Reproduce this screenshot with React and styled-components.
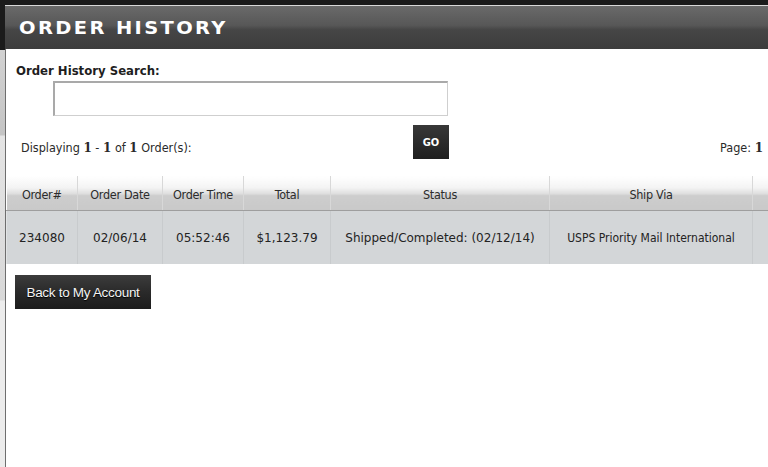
import styled, { createGlobalStyle } from 'styled-components';

const GlobalStyle = createGlobalStyle`
	html, body {
		margin: 0;
		padding: 0;
		background: #ffffff;
		overflow: hidden;
	}
	body {
		font-family: 'DejaVu Sans Condensed', 'DejaVu Sans', sans-serif;
		color: #222;
	}
`;

const Page = styled.div`
	width: 768px;
	height: 467px;
	display: flex;
	flex-direction: column;
	background: #ffffff;
`;

const TopStrip = styled.div`
	height: 5px;
	background: #1b1b1b;
`;

const Body = styled.div`
	flex: 1;
	display: flex;
`;

const LeftRail = styled.div`
	width: 5px;
	background: linear-gradient(
		180deg,
		#1b1b1b 0px,
		#1b1b1b 45px,
		#d2d2d2 45px,
		#c4c4c4 130px,
		#e4e4e4 131px,
		#d8d8d8 295px,
		#ececec 296px
	);
	border-right: 1px solid #6e6e6e;
`;

const Main = styled.div`
	flex: 1;
	min-width: 0;
	display: flex;
	flex-direction: column;
`;

const Header = styled.div`
	height: 43px;
	border-top: 1px solid #d9d9d9;
	background: linear-gradient(180deg, #6a6a6a 0%, #575757 45%, #464646 55%, #3c3c3c 100%);
	display: flex;
	align-items: center;
	padding-left: 14px;
	margin-left: -1px;
`;

const Title = styled.h1`
	margin: 0;
	font-family: 'DejaVu Sans', sans-serif;
	font-weight: 900;
	font-size: 18px;
	letter-spacing: 2.2px;
	color: #ffffff;
	text-transform: uppercase;
	line-height: 1;
	padding-top: 1px;
	transform: scaleX(1.08);
	transform-origin: left center;
`;

const Content = styled.div`
	display: flex;
	flex-direction: column;
	padding-top: 14px;
`;

const SearchLabel = styled.label`
	font-weight: bold;
	font-size: 13px;
	color: #1e1e1e;
	padding-left: 10px;
	line-height: 16px;
`;

const SearchInput = styled.input`
	margin: 2px 0 0 47px;
	width: 395px;
	height: 35px;
	box-sizing: border-box;
	border: 1px solid #cfcfcf;
	border-top: 2px solid #a9a9a9;
	border-left: 2px solid #a9a9a9;
	background: #ffffff;
	outline: none;
`;

const ResultBar = styled.div`
	display: flex;
	align-items: center;
	margin-top: 9px;
	height: 34px;
`;

const ResultLeft = styled.div`
	width: 442px;
	display: flex;
	align-items: center;
	justify-content: space-between;
	padding-left: 15px;
	box-sizing: border-box;
`;

const Info = styled.span`
	font-size: 12.5px;
	color: #2a2a2a;
	padding-top: 11px;

	b {
		font-family: 'DejaVu Serif', serif;
		font-weight: bold;
		font-size: 12px;
	}
`;

const GoButton = styled.button`
	width: 36px;
	height: 34px;
	border: none;
	background: linear-gradient(180deg, #383838 0%, #1f1f1f 100%);
	color: #ffffff;
	font-family: 'DejaVu Sans Condensed', sans-serif;
	font-weight: bold;
	font-size: 11px;
	padding: 0;
	margin-right: -1px;
`;

const PageInfo = styled(Info)`
	margin-left: auto;
	padding-right: 5px;
`;

const Table = styled.table`
	margin-top: 17px;
	width: 762px;
	table-layout: fixed;
	border-collapse: collapse;
	border-spacing: 0;
`;

const HeadCell = styled.th`
	height: 32px;
	padding: 0;
	padding-top: 2px;
	font-weight: normal;
	font-size: 12.5px;
	color: #2c2c2c;
	letter-spacing: -0.3px;
	text-align: center;
	background: linear-gradient(180deg, #ffffff 0%, #f3f3f3 35%, #dedede 52%, #cdcdcd 58%, #c9c9c9 100%);
	border-right: 1px solid #d8d8d8;
	border-bottom: 1px solid #9e9e9e;
	&:last-child {
		border-right: none;
	}
`;

const Cell = styled.td`
	height: 52px;
	padding: 0;
	padding-top: 1px;
	text-align: center;
	background: #d3d6d8;
	border-right: 1px solid #c8cbcd;
	font-family: ${(p) => (p.$mono ? "'DejaVu Sans', sans-serif" : "'DejaVu Sans Condensed', sans-serif")};
	font-size: 12px;
	color: #232323;
	white-space: nowrap;
	overflow: hidden;
	&:first-child {
		border-left: 1px solid #e2e4e5;
	}
	&:last-child {
		border-right: none;
	}
`;

const BackButton = styled.button`
	align-self: flex-start;
	margin: 11px 0 0 9px;
	width: 136px;
	height: 34px;
	border: none;
	background: linear-gradient(180deg, #3c3c3c 0%, #2a2a2a 50%, #1c1c1c 100%);
	color: #f4f4f4;
	font-family: 'Liberation Sans', Arial, sans-serif;
	font-size: 13.5px;
	letter-spacing: -0.3px;
	text-shadow: 0 1px 1px #000;
	padding: 0;
`;

const columns = [
	{ label: 'Order#', w: 71 },
	{ label: 'Order Date', w: 85 },
	{ label: 'Order Time', w: 81 },
	{ label: 'Total', w: 87 },
	{ label: 'Status', w: 219 },
	{ label: 'Ship Via', w: 203 },
	{ label: '', w: 16 },
];

const row = [
	{ v: '234080', mono: true },
	{ v: '02/06/14', mono: true },
	{ v: '05:52:46', mono: true },
	{ v: '$1,123.79', mono: true },
	{ v: 'Shipped/Completed: (02/12/14)', mono: true },
	{ v: 'USPS Priority Mail International', mono: false },
	{ v: '', mono: false },
];

const App = () => {
	return (
		<>
			<GlobalStyle />
			<Page>
				<TopStrip />
				<Body>
					<LeftRail />
					<Main>
						<Header>
							<Title>Order History</Title>
						</Header>
						<Content>
							<SearchLabel htmlFor="search">Order History Search:</SearchLabel>
							<SearchInput id="search" type="text" />
							<ResultBar>
								<ResultLeft>
									<Info>
										Displaying <b>1</b> - <b>1</b> of <b>1</b> Order(s):
									</Info>
									<GoButton>GO</GoButton>
								</ResultLeft>
								<PageInfo>
									Page: <b>1</b>
								</PageInfo>
							</ResultBar>
							<Table>
								<colgroup>
									{columns.map((c, i) => (
										<col key={i} style={{ width: c.w }} />
									))}
								</colgroup>
								<thead>
									<tr>
										{columns.map((c, i) => (
											<HeadCell key={i}>{c.label}</HeadCell>
										))}
									</tr>
								</thead>
								<tbody>
									<tr>
										{row.map((c, i) => (
											<Cell key={i} $mono={c.mono}>
												{c.v}
											</Cell>
										))}
									</tr>
								</tbody>
							</Table>
							<BackButton>Back to My Account</BackButton>
						</Content>
					</Main>
				</Body>
			</Page>
		</>
	);
};

export default App;
